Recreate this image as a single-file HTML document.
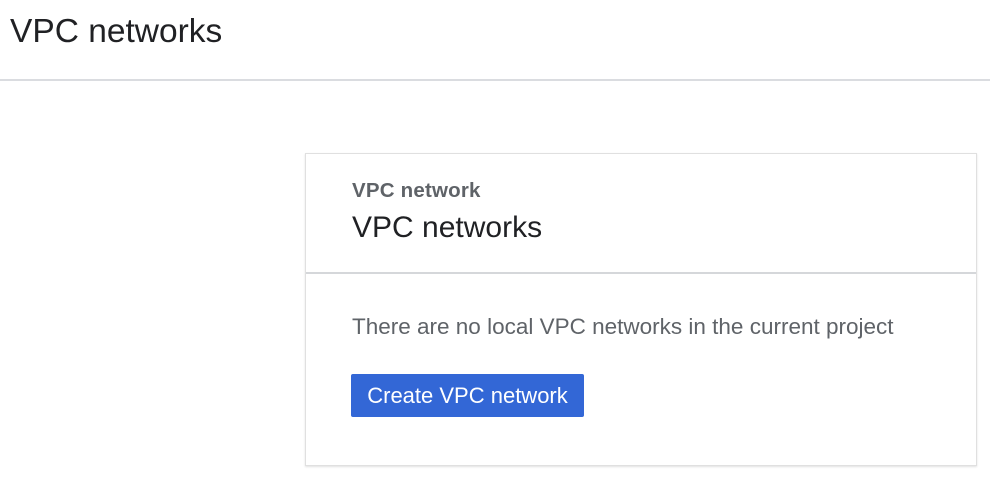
<!DOCTYPE html>
<html><head><meta charset="utf-8"><style>
html,body{margin:0;padding:0;background:#fff;width:990px;height:480px;overflow:hidden;font-family:"Liberation Sans",Arial,sans-serif;}
.top{position:absolute;left:0;top:0;width:990px;height:79px;border-bottom:2px solid #dadce0;}
.top h1{position:absolute;left:10px;top:13px;margin:0;font-weight:normal;font-size:33.5px;color:#202124;white-space:nowrap;}
.card{position:absolute;left:305px;top:153px;width:670px;height:311px;border:1px solid #e0e0e0;box-shadow:0 1px 2px rgba(0,0,0,.12);}
.sub{position:absolute;left:46px;top:25px;font-size:20.5px;color:#5f6368;font-weight:bold;white-space:nowrap;letter-spacing:0.2px}
.t{position:absolute;left:46px;top:57px;font-size:30px;color:#202124;white-space:nowrap;}
.div{position:absolute;left:0;top:118px;width:670px;height:2px;background:#d5d7da;}
.msg{position:absolute;left:46px;top:160px;font-size:22.5px;color:#5f6368;white-space:nowrap;}
.btn{position:absolute;left:45px;top:220px;width:233px;height:43px;background:#3367d6;border-radius:2px;color:#fff;font-size:22px;line-height:43px;text-align:center;white-space:nowrap;}
</style></head><body>
<div class="top"><h1>VPC networks</h1></div>
<div class="card">
<div class="sub">VPC network</div>
<div class="t">VPC networks</div>
<div class="div"></div>
<div class="msg">There are no local VPC networks in the current project</div>
<div class="btn">Create VPC network</div>
</div>
</body></html>
